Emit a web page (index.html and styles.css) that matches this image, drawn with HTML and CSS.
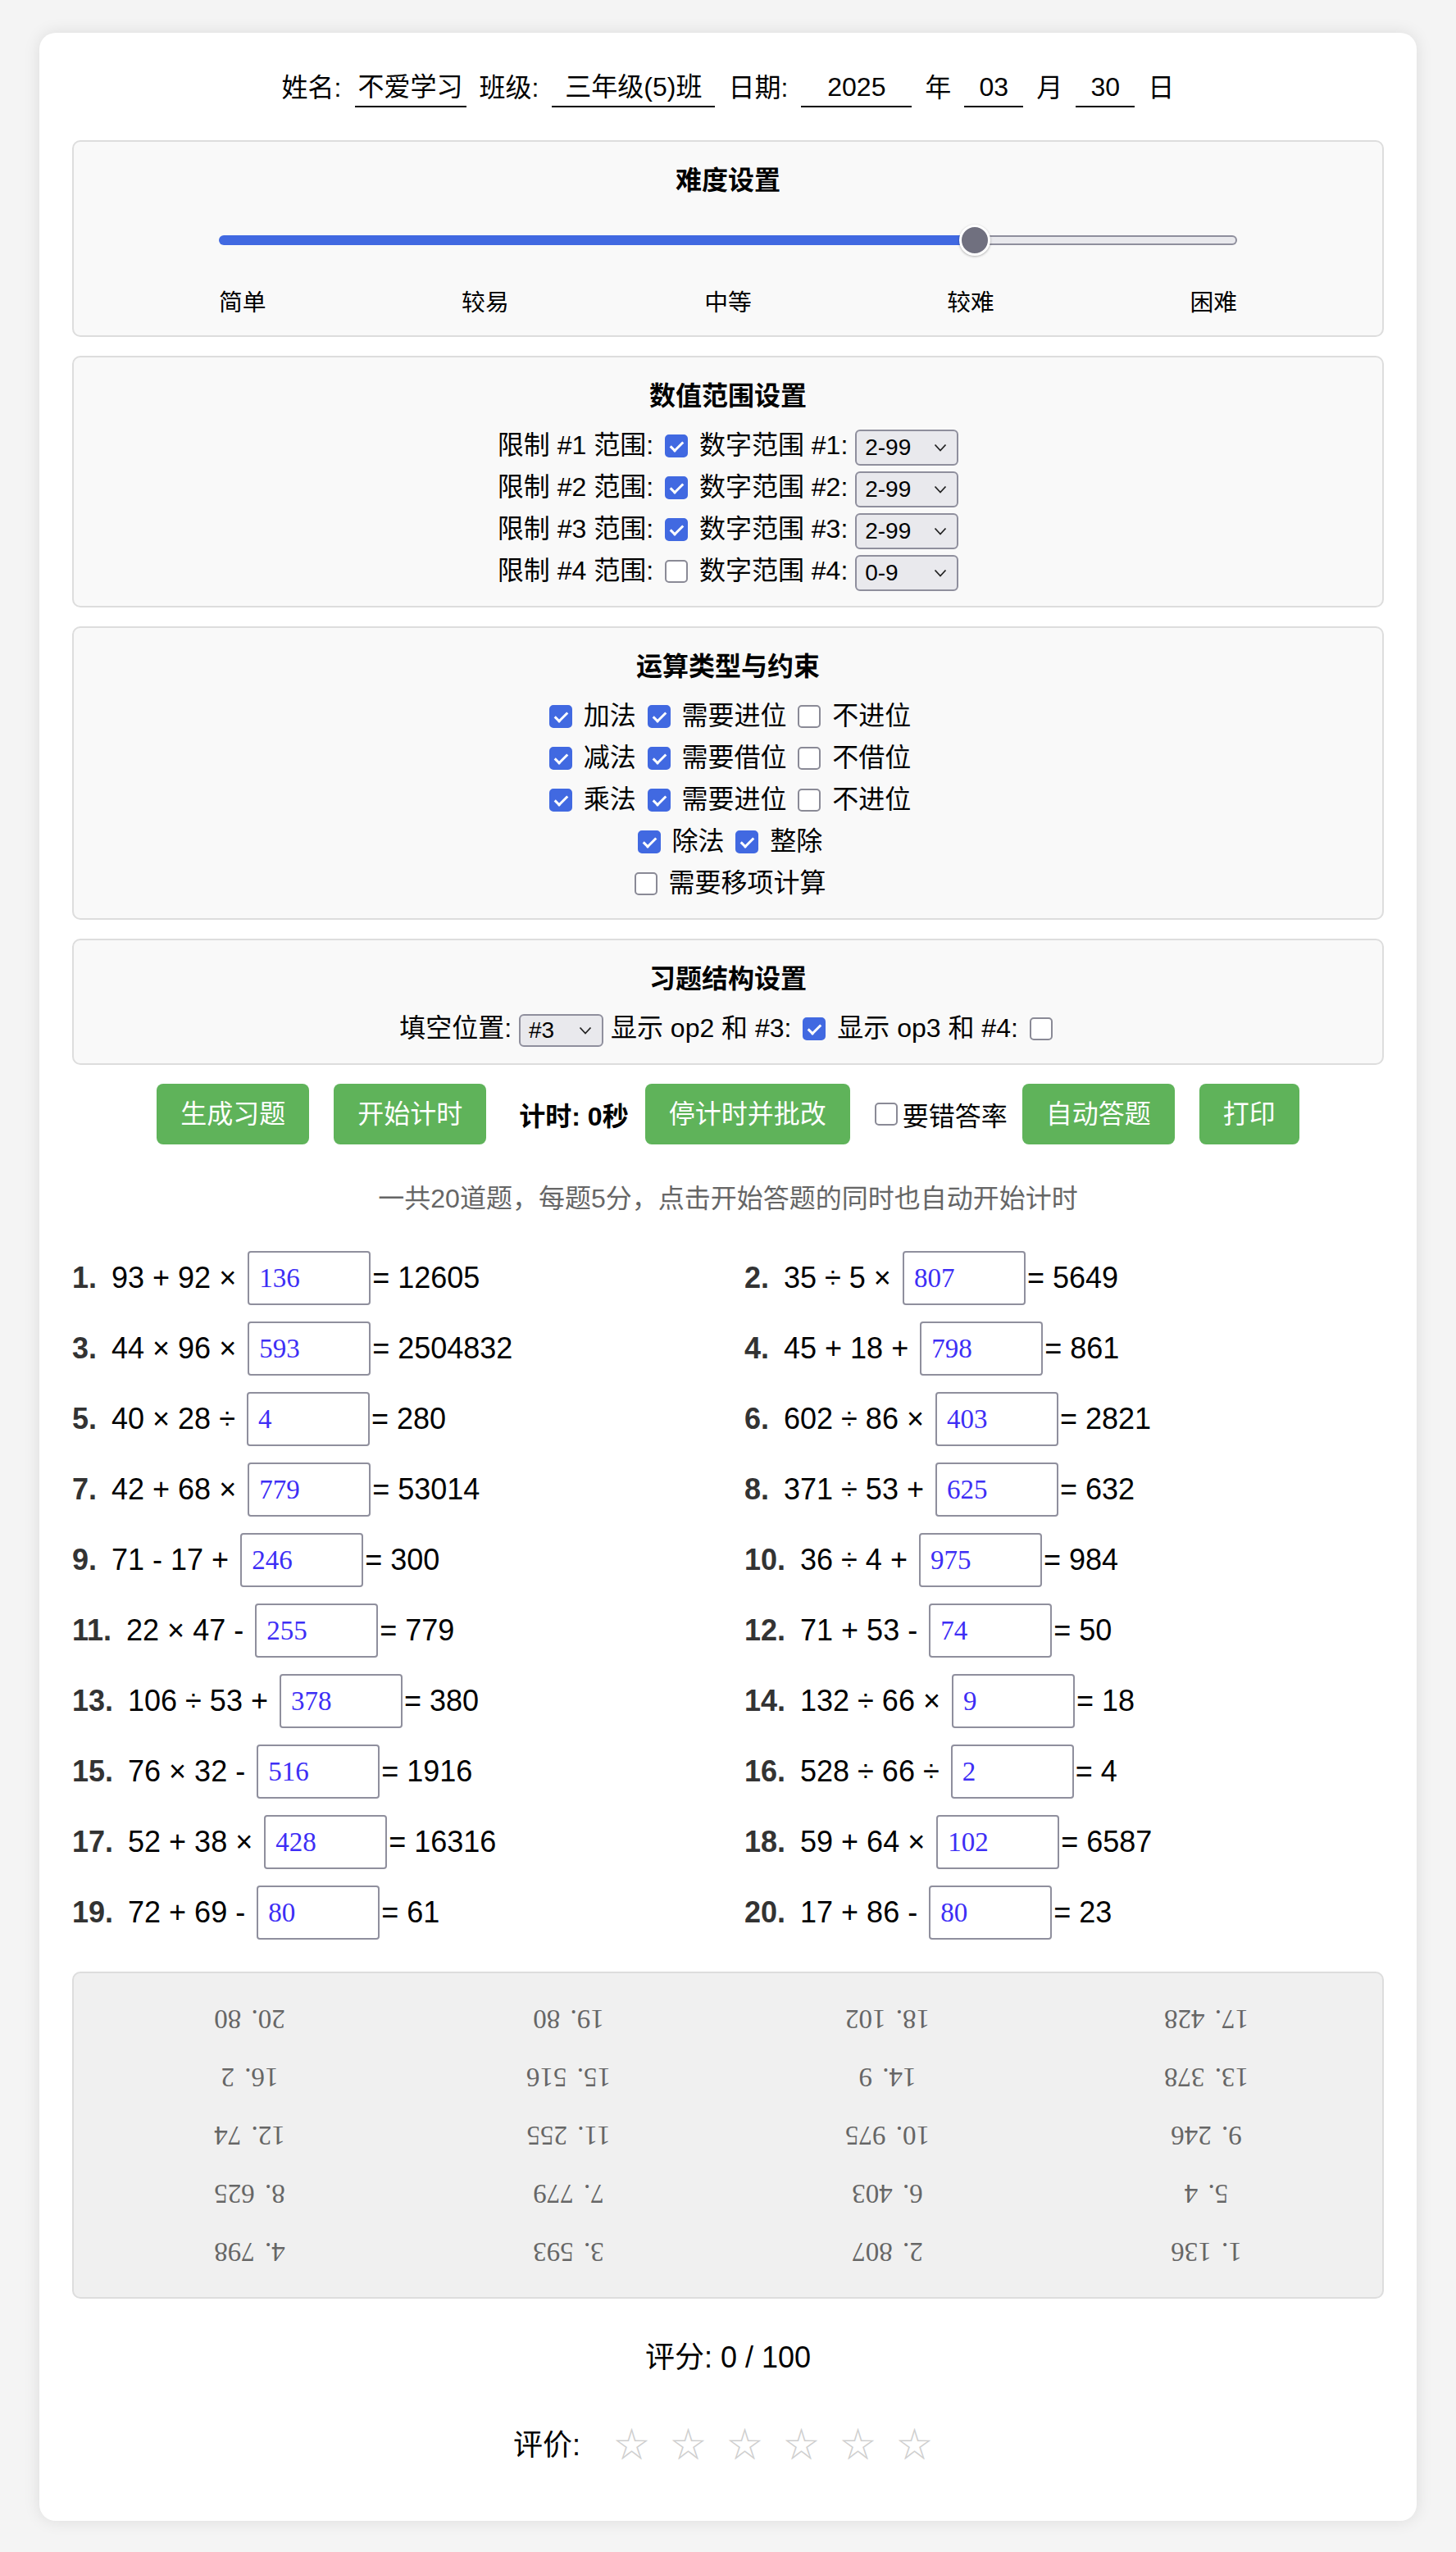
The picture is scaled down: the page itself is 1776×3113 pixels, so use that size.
FILE: index.html
```html
<!DOCTYPE html>
<html lang="zh-CN">
<head>
<meta charset="utf-8">
<title>口算练习</title>
<link rel="stylesheet" href="styles.css">
</head>
<body>
<div class="sheet">
  <div class="head">
    <span class="lbl">姓名:</span><span class="field f-name">不爱学习</span>
    <span class="lbl">班级:</span><span class="field f-class">三年级(5)班</span>
    <span class="lbl">日期:</span><span class="field f-year">2025</span>
    <span class="lbl">年</span><span class="field f-md">03</span>
    <span class="lbl">月</span><span class="field f-md">30</span>
    <span class="lbl">日</span>
  </div>

  <section class="panel">
    <h3 class="panel-title">难度设置</h3>
    <div class="slider-wrap">
      <div class="slider">
        <div class="fill" style="width:922px"></div>
        <div class="rest"></div>
        <div class="thumb" style="left:922px"></div>
      </div>
    </div>
    <div class="levels"><span>简单</span><span>较易</span><span>中等</span><span>较难</span><span>困难</span></div>
  </section>

  <section class="panel">
    <h3 class="panel-title">数值范围设置</h3>
    <div class="row">限制 #1 范围: <input type="checkbox" class="cb" checked> 数字范围 #1: <span class="select"><span>2-99</span><svg width="16" height="10" viewBox="0 0 16 10"><polyline points="1.5,1.5 8,8.5 14.5,1.5" fill="none" stroke="#222" stroke-width="1.8"/></svg></span></div>
    <div class="row">限制 #2 范围: <input type="checkbox" class="cb" checked> 数字范围 #2: <span class="select"><span>2-99</span><svg width="16" height="10" viewBox="0 0 16 10"><polyline points="1.5,1.5 8,8.5 14.5,1.5" fill="none" stroke="#222" stroke-width="1.8"/></svg></span></div>
    <div class="row">限制 #3 范围: <input type="checkbox" class="cb" checked> 数字范围 #3: <span class="select"><span>2-99</span><svg width="16" height="10" viewBox="0 0 16 10"><polyline points="1.5,1.5 8,8.5 14.5,1.5" fill="none" stroke="#222" stroke-width="1.8"/></svg></span></div>
    <div class="row">限制 #4 范围: <input type="checkbox" class="cb"> 数字范围 #4: <span class="select"><span>0-9</span><svg width="16" height="10" viewBox="0 0 16 10"><polyline points="1.5,1.5 8,8.5 14.5,1.5" fill="none" stroke="#222" stroke-width="1.8"/></svg></span></div>
  </section>

  <section class="panel">
    <h3 class="panel-title">运算类型与约束</h3>
    <div class="row"><input type="checkbox" class="cb" checked> 加法 <input type="checkbox" class="cb" checked> 需要进位 <input type="checkbox" class="cb"> 不进位</div>
    <div class="row"><input type="checkbox" class="cb" checked> 减法 <input type="checkbox" class="cb" checked> 需要借位 <input type="checkbox" class="cb"> 不借位</div>
    <div class="row"><input type="checkbox" class="cb" checked> 乘法 <input type="checkbox" class="cb" checked> 需要进位 <input type="checkbox" class="cb"> 不进位</div>
    <div class="row"><input type="checkbox" class="cb" checked> 除法 <input type="checkbox" class="cb" checked> 整除</div>
    <div class="row"><input type="checkbox" class="cb"> 需要移项计算</div>
  </section>

  <section class="panel">
    <h3 class="panel-title">习题结构设置</h3>
    <div class="row">填空位置: <span class="select select-sm"><span>#3</span><svg width="16" height="10" viewBox="0 0 16 10"><polyline points="1.5,1.5 8,8.5 14.5,1.5" fill="none" stroke="#222" stroke-width="1.8"/></svg></span> 显示 op2 和 #3: <input type="checkbox" class="cb" checked> 显示 op3 和 #4: <input type="checkbox" class="cb"></div>
  </section>

  <div class="toolbar">
    <button class="btn">生成习题</button>
    <button class="btn gap-30">开始计时</button>
    <strong class="timer">计时: 0秒</strong>
    <button class="btn gap-20">停计时并批改</button>
    <input type="checkbox" class="cb cb-bar">
    <span class="wrong">要错答率</span>
    <button class="btn gap-18">自动答题</button>
    <button class="btn gap-30">打印</button>
  </div>

  <p class="hint">一共20道题，每题5分，点击开始答题的同时也自动开始计时</p>

  <div class="problems">
    <div class="prob"><b class="no">1.</b><span class="expr">93 + 92 ×</span><input class="ans" value="136"><span class="res">= 12605</span></div>
    <div class="prob"><b class="no">2.</b><span class="expr">35 ÷ 5 ×</span><input class="ans" value="807"><span class="res">= 5649</span></div>
    <div class="prob"><b class="no">3.</b><span class="expr">44 × 96 ×</span><input class="ans" value="593"><span class="res">= 2504832</span></div>
    <div class="prob"><b class="no">4.</b><span class="expr">45 + 18 +</span><input class="ans" value="798"><span class="res">= 861</span></div>
    <div class="prob"><b class="no">5.</b><span class="expr">40 × 28 ÷</span><input class="ans" value="4"><span class="res">= 280</span></div>
    <div class="prob"><b class="no">6.</b><span class="expr">602 ÷ 86 ×</span><input class="ans" value="403"><span class="res">= 2821</span></div>
    <div class="prob"><b class="no">7.</b><span class="expr">42 + 68 ×</span><input class="ans" value="779"><span class="res">= 53014</span></div>
    <div class="prob"><b class="no">8.</b><span class="expr">371 ÷ 53 +</span><input class="ans" value="625"><span class="res">= 632</span></div>
    <div class="prob"><b class="no">9.</b><span class="expr">71 - 17 +</span><input class="ans" value="246"><span class="res">= 300</span></div>
    <div class="prob"><b class="no">10.</b><span class="expr">36 ÷ 4 +</span><input class="ans" value="975"><span class="res">= 984</span></div>
    <div class="prob"><b class="no">11.</b><span class="expr">22 × 47 -</span><input class="ans" value="255"><span class="res">= 779</span></div>
    <div class="prob"><b class="no">12.</b><span class="expr">71 + 53 -</span><input class="ans" value="74"><span class="res">= 50</span></div>
    <div class="prob"><b class="no">13.</b><span class="expr">106 ÷ 53 +</span><input class="ans" value="378"><span class="res">= 380</span></div>
    <div class="prob"><b class="no">14.</b><span class="expr">132 ÷ 66 ×</span><input class="ans" value="9"><span class="res">= 18</span></div>
    <div class="prob"><b class="no">15.</b><span class="expr">76 × 32 -</span><input class="ans" value="516"><span class="res">= 1916</span></div>
    <div class="prob"><b class="no">16.</b><span class="expr">528 ÷ 66 ÷</span><input class="ans" value="2"><span class="res">= 4</span></div>
    <div class="prob"><b class="no">17.</b><span class="expr">52 + 38 ×</span><input class="ans" value="428"><span class="res">= 16316</span></div>
    <div class="prob"><b class="no">18.</b><span class="expr">59 + 64 ×</span><input class="ans" value="102"><span class="res">= 6587</span></div>
    <div class="prob"><b class="no">19.</b><span class="expr">72 + 69 -</span><input class="ans" value="80"><span class="res">= 61</span></div>
    <div class="prob"><b class="no">20.</b><span class="expr">17 + 86 -</span><input class="ans" value="80"><span class="res">= 23</span></div>
  </div>

  <div class="key">
    <div class="key-grid">
      <span>1. 136</span><span>2. 807</span><span>3. 593</span><span>4. 798</span>
      <span>5. 4</span><span>6. 403</span><span>7. 779</span><span>8. 625</span>
      <span>9. 246</span><span>10. 975</span><span>11. 255</span><span>12. 74</span>
      <span>13. 378</span><span>14. 9</span><span>15. 516</span><span>16. 2</span>
      <span>17. 428</span><span>18. 102</span><span>19. 80</span><span>20. 80</span>
    </div>
  </div>

  <div class="score">评分: 0 / 100</div>

  <div class="rating">
    <span class="rate-lbl">评价:</span>
    <span class="star">☆</span><span class="star">☆</span><span class="star">☆</span><span class="star">☆</span><span class="star">☆</span><span class="star">☆</span>
  </div>
</div>
</body>
</html>
```

FILE: styles.css
```css
* { box-sizing: border-box; }

body {
  margin: 0;
  background: #f4f4f4;
  font-family: "Liberation Sans", "Noto Sans CJK SC", sans-serif;
  color: #000;
}

.sheet {
  width: 1680px;
  margin: 40px auto 38px;
  padding: 40px;
  background: #fff;
  border-radius: 20px;
  box-shadow: 0 0 20px rgba(0, 0, 0, 0.1);
}

/* header */
.head {
  display: flex;
  justify-content: center;
  align-items: center;
  gap: 16px;
  height: 54px;
  margin-bottom: 37px;
  font-size: 32px;
  line-height: 54px;
  white-space: nowrap;
}
.field {
  display: inline-block;
  text-align: center;
  line-height: 46px;
  border-bottom: 2px solid #000;
}
.f-name { width: 136px; }
.f-class { width: 199px; }
.f-year { width: 135px; }
.f-md { width: 72px; }

/* panels */
.panel {
  background: #f9f9f9;
  border: 2px solid #ddd;
  border-radius: 10px;
  padding: 29px 20px 17px;
  margin-bottom: 23px;
  text-align: center;
  font-size: 32px;
}
.panel-title {
  margin: 0 0 17px;
  font-size: 32px;
  font-weight: bold;
  line-height: 36px;
}
.row {
  height: 51px;
  line-height: 51px;
  white-space: nowrap;
}

/* slider */
.slider-wrap {
  height: 75px;
  display: flex;
  justify-content: center;
  align-items: center;
}
.slider {
  position: relative;
  display: flex;
  width: 1242px;
  height: 12px;
}
.fill {
  height: 12px;
  background: #4169e1;
  border-radius: 6px 0 0 6px;
}
.rest {
  flex: 1;
  height: 12px;
  background: #e9e9ed;
  border: 2px solid #8f8f9d;
  border-left: none;
  border-radius: 0 6px 6px 0;
}
.thumb {
  position: absolute;
  top: 50%;
  width: 38px;
  height: 38px;
  transform: translate(-50%, -50%);
  border-radius: 50%;
  background: #70707f;
  border: 3px solid #fff;
  box-shadow: 0 1px 3px rgba(0, 0, 0, 0.3);
}
.levels {
  width: 1242px;
  margin: 17px auto 0;
  display: flex;
  justify-content: space-between;
  font-size: 28.8px;
  line-height: 45px;
}

/* checkboxes */
.cb {
  -webkit-appearance: none;
  appearance: none;
  position: relative;
  width: 28px;
  height: 28px;
  margin: 0 5px;
  border: 2px solid #8a8a96;
  border-radius: 5px;
  background: #fff;
  vertical-align: -4px;
}
.cb:checked {
  background: #4169e1;
  border-color: #4169e1;
}
.cb:checked::after {
  content: "";
  position: absolute;
  left: 8px;
  top: 3px;
  width: 6px;
  height: 13px;
  border: solid #fff;
  border-width: 0 3px 3px 0;
  transform: rotate(45deg);
}

/* fake select */
.select {
  display: inline-flex;
  align-items: center;
  justify-content: space-between;
  width: 126px;
  height: 44px;
  padding: 0 12px 0 10px;
  border: 2px solid #8f8f9d;
  border-radius: 6px;
  background: #e9e9ed;
  font-size: 28px;
  line-height: 40px;
  text-align: left;
  vertical-align: middle;
}
.select-sm {
  width: 103px;
  height: 40px;
}

/* toolbar */
.toolbar {
  display: flex;
  justify-content: center;
  align-items: center;
  height: 74px;
  white-space: nowrap;
}
.btn {
  height: 74px;
  padding: 0 29px;
  border: none;
  border-radius: 8px;
  background: #5fb35a;
  color: #fff;
  font-family: "Liberation Sans", "Noto Sans CJK SC", sans-serif;
  font-size: 32px;
  line-height: 74px;
}
.gap-30 { margin-left: 30px; }
.gap-20 { margin-left: 20px; }
.gap-18 { margin-left: 18px; }
.timer {
  margin-left: 40px;
  font-size: 32px;
}
.cb-bar {
  margin: 0 6px 0 30px;
  vertical-align: middle;
}
.wrong {
  font-size: 32px;
}

.hint {
  margin: 46px 0 0;
  text-align: center;
  color: #666;
  font-size: 32px;
  line-height: 40px;
}

/* problems */
.problems {
  margin-top: 34px;
  display: grid;
  grid-template-columns: 1fr 1fr;
  column-gap: 40px;
}
.prob {
  height: 86px;
  display: flex;
  align-items: center;
  font-size: 36px;
  white-space: nowrap;
}
.no {
  color: #333;
  font-weight: bold;
  margin-right: 18px;
}
.expr { margin-right: 14px; }
.ans {
  width: 150px;
  height: 66px;
  padding: 0 0 0 12px;
  border: 2px solid #8f8f9d;
  border-radius: 4px;
  background: #fff;
  color: #3d2ef5;
  font-family: "Liberation Serif", serif;
  font-size: 33px;
}
.res { margin-left: 2px; }

/* answer key */
.key {
  margin-top: 29px;
  padding: 20px;
  background: #f0f0f0;
  border: 2px solid #ddd;
  border-radius: 10px;
}
.key-grid {
  display: grid;
  grid-template-columns: repeat(4, 1fr);
  transform: rotate(180deg);
}
.key-grid span {
  text-align: center;
  color: #666;
  font-family: "Liberation Serif", serif;
  font-size: 33px;
  line-height: 71px;
  word-spacing: 4px;
}

/* score & rating */
.score {
  margin-top: 50px;
  text-align: center;
  font-size: 36px;
  line-height: 44px;
}
.rating {
  margin: 51px 0 26px;
  height: 60px;
  display: flex;
  justify-content: center;
  align-items: center;
  font-size: 36px;
}
.rate-lbl { margin-right: 28px; }
.star {
  width: 69px;
  text-align: center;
  color: #cfcfcf;
  font-family: "Noto Sans CJK SC", sans-serif;
  font-size: 42px;
  line-height: 60px;
}
```
